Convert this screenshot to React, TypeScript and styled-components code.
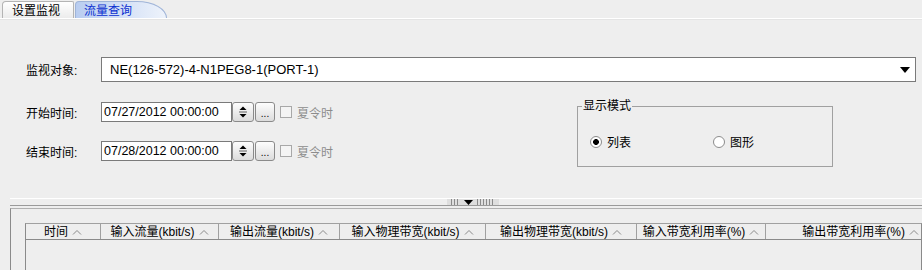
import React, { useState } from "react";
import styled, { createGlobalStyle } from "styled-components";

const GlobalStyle = createGlobalStyle`
  html, body {
    margin: 0;
    padding: 0;
    background: #eeeeee;
  }
  body {
    font-family: "Liberation Sans", "Noto Sans CJK SC", sans-serif;
    font-size: 12px;
    color: #000;
  }
`;

const columns = [
  { title: "时间", width: 75 },
  { title: "输入流量(kbit/s)", width: 118 },
  { title: "输出流量(kbit/s)", width: 121 },
  { title: "输入物理带宽(kbit/s)", width: 146 },
  { title: "输出物理带宽(kbit/s)", width: 151 },
  { title: "输入带宽利用率(%)", width: 129 },
  { title: "输出带宽利用率(%)", width: 0, last: true },
];

const SortCaret = () => (
  <svg width="10" height="6" viewBox="0 0 10 6">
    <path d="M1 5.5 L5 1.5 L9 5.5" fill="none" stroke="#8a8a8a" strokeWidth="1" />
  </svg>
);

const ComboArrow = () => (
  <svg width="10" height="6" viewBox="0 0 10 6">
    <path d="M0 0 H10 L5 6 Z" fill="#000" />
  </svg>
);

const SpinArrows = () => (
  <svg width="10" height="16" viewBox="0 0 10 16">
    <path d="M1.5 6 L5 2.5 L8.5 6 Z" fill="#000" />
    <path d="M1 8 H9" stroke="#606060" strokeWidth="1" />
    <path d="M1.5 10 L5 13.5 L8.5 10 Z" fill="#000" />
  </svg>
);

export default function App() {
  const [mode, setMode] = useState<"list" | "chart">("list");
  return (
    <>
      <GlobalStyle />
      <Frame>
        <TabBar>
          <Tab>设置监视</Tab>
          <Tab $active>流量查询</Tab>
        </TabBar>

        <TopPane>
          <FieldRow>
            <Label>监视对象:</Label>
            <Combo>
              <span>NE(126-572)-4-N1PEG8-1(PORT-1)</span>
              <ComboArrow />
            </Combo>
          </FieldRow>

          <TimeSection>
            <TimeColumn>
              {[
                ["开始时间:", "07/27/2012 00:00:00"],
                ["结束时间:", "07/28/2012 00:00:00"],
              ].map(([label, value]) => (
                <TimeRow key={label}>
                  <Label>{label}</Label>
                  <DateInput>{value}</DateInput>
                  <Spinner>
                    <SpinArrows />
                  </Spinner>
                  <DotsButton>...</DotsButton>
                  <CheckBox />
                  <DimText>夏令时</DimText>
                </TimeRow>
              ))}
            </TimeColumn>

            <GroupBox>
              <Legend>显示模式</Legend>
              <RadioRow>
                <RadioItem $width={123} onClick={() => setMode("list")}>
                  <Radio $checked={mode === "list"} />
                  列表
                </RadioItem>
                <RadioItem $width={100} onClick={() => setMode("chart")}>
                  <Radio $checked={mode === "chart"} />
                  图形
                </RadioItem>
              </RadioRow>
            </GroupBox>
          </TimeSection>
        </TopPane>

        <Divider>
          <Grip>
            <GripLines $count={3} />
            <svg width="9" height="5" viewBox="0 0 9 5">
              <path d="M0 0 H9 L4.5 5 Z" fill="#000" />
            </svg>
            <GripLines $count={6} />
          </Grip>
        </Divider>

        <BottomPane>
          <Table>
            <HeaderRow>
              {columns.map((c) => (
                <HeaderCell key={c.title} $width={c.width} $last={c.last}>
                  {c.title}
                  <SortCaret />
                </HeaderCell>
              ))}
            </HeaderRow>
            <TableBody />
          </Table>
        </BottomPane>
      </Frame>
    </>
  );
}

const Frame = styled.div`
  width: 922px;
  height: 270px;
  overflow: hidden;
  display: flex;
  flex-direction: column;
  background: #eeeeee;
`;

const TabBar = styled.div`
  height: 18px;
  display: flex;
  align-items: flex-end;
  padding-left: 2px;
  border-bottom: 1px solid #ffffff;
  box-shadow: 0 1px 0 #e4e4e4;
`;

const Tab = styled.div<{ $active?: boolean }>`
  height: 17px;
  box-sizing: border-box;
  display: flex;
  align-items: center;
  font-size: 12px;
  line-height: 12px;
  padding: 1px ${(p) => (p.$active ? "34px" : "13px")} 0 ${(p) => (p.$active ? "8px" : "9px")};
  margin-right: ${(p) => (p.$active ? "0" : "1px")};
  color: ${(p) => (p.$active ? "#0a2fd0" : "#000")};
  border: 1px solid ${(p) => (p.$active ? "#9fb4d8" : "#b4b4b4")};
  border-bottom: none;
  border-radius: ${(p) => (p.$active ? "4px 30px 0 0 / 4px 17px 0 0" : "4px 2px 0 0")};
  background: ${(p) =>
    p.$active
      ? "linear-gradient(to right, #b9cdf0 0%, #d3e0f6 50%, #eef3fb 100%)"
      : "linear-gradient(to bottom, #ffffff, #ececec)"};
`;

const TopPane = styled.div`
  height: 179px;
  padding: 38px 0 0 26px;
  box-sizing: border-box;
`;

const FieldRow = styled.div`
  display: flex;
  align-items: center;
  height: 25px;
`;

const Label = styled.div`
  width: 75px;
  flex: none;
  font-size: 12px;
  color: #000;
`;

const Combo = styled.div`
  width: 815px;
  height: 25px;
  box-sizing: border-box;
  border: 1px solid #7a7a7a;
  background: #ffffff;
  display: flex;
  align-items: center;
  justify-content: space-between;
  padding: 0 5px 0 8px;
  font-size: 13px;
`;

const TimeSection = styled.div`
  display: flex;
  margin-top: 20px;
`;

const TimeColumn = styled.div`
  width: 548px;
  display: flex;
  flex-direction: column;
  gap: 19px;
`;

const TimeRow = styled.div`
  display: flex;
  align-items: center;
  height: 20px;
`;

const DateInput = styled.div`
  width: 131px;
  height: 20px;
  box-sizing: border-box;
  border: 1px solid #7a7a7a;
  background: #ffffff;
  padding-left: 2px;
  font-size: 12.5px;
  display: flex;
  align-items: center;
`;

const Spinner = styled.div`
  width: 22px;
  height: 20px;
  box-sizing: border-box;
  border: 1px solid #8a8a8a;
  border-radius: 3px;
  background: linear-gradient(to bottom, #fdfdfd, #dcdcdc);
  display: flex;
  align-items: center;
  justify-content: center;
`;

const DotsButton = styled.div`
  width: 20px;
  height: 20px;
  box-sizing: border-box;
  margin-left: 1px;
  border: 1px solid #8a8a8a;
  border-radius: 3px;
  background: linear-gradient(to bottom, #fdfdfd, #dcdcdc);
  display: flex;
  align-items: flex-end;
  justify-content: center;
  font-size: 10px;
  line-height: 14px;
  color: #000;
`;

const CheckBox = styled.div`
  width: 12px;
  height: 12px;
  box-sizing: border-box;
  margin-left: 5px;
  border: 1px solid #a8a8a8;
  background: #f4f4f4;
`;

const DimText = styled.span`
  margin-left: 5px;
  color: #8c8c8c;
  font-size: 12px;
`;

const GroupBox = styled.fieldset`
  width: 256px;
  height: 67px;
  box-sizing: border-box;
  margin: -2px 0 0 3px;
  padding: 0 0 0 12px;
  border: 1px solid #a0a0a0;
  border-radius: 0;
`;

const Legend = styled.legend`
  padding: 0 1px;
  margin-left: -8px;
  font-size: 12px;
  line-height: 12px;
  color: #000;
`;

const RadioRow = styled.div`
  display: flex;
  align-items: center;
  margin-top: 21px;
`;

const RadioItem = styled.label<{ $width: number }>`
  width: ${(p) => p.$width}px;
  display: flex;
  align-items: center;
  gap: 5px;
  font-size: 12px;
  cursor: default;
`;

const Radio = styled.span<{ $checked: boolean }>`
  width: 12px;
  height: 12px;
  box-sizing: border-box;
  border-radius: 50%;
  border: 1px solid #8c8c8c;
  background: ${(p) =>
    p.$checked
      ? "radial-gradient(circle, #000 0 2.6px, #ffffff 3.2px)"
      : "#ffffff"};
`;

const Divider = styled.div`
  margin-left: 10px;
  height: 6px;
  border-top: 1px solid #ffffff;
  border-bottom: 1px solid #9a9a9a;
  display: flex;
  justify-content: center;
`;

const Grip = styled.div`
  display: flex;
  align-items: center;
  gap: 4px;
  height: 6px;
  margin-left: 14px;
  padding: 0 4px;
  background: #dedede;
`;

const GripLines = styled.div<{ $count: number }>`
  width: ${(p) => p.$count * 3}px;
  height: 6px;
  background: repeating-linear-gradient(
    to right,
    #8a8a8a 0 1px,
    transparent 1px 3px
  );
`;

const BottomPane = styled.div`
  flex: 1;
  margin-left: 10px;
  margin-top: 2px;
  border-left: 1px solid #8a8a8a;
  border-top: 1px solid #b0b0b0;
  padding: 14px 0 0 14px;
`;

const Table = styled.div`
  height: 100%;
  border-left: 1px solid #8a8a8a;
  border-right: 1px solid #8a8a8a;
  border-top: 1px solid #a0a0a0;
  display: flex;
  flex-direction: column;
`;

const HeaderRow = styled.div`
  display: flex;
  height: 16px;
  box-sizing: border-box;
  border-bottom: 1px solid #8a8a8a;
`;

const HeaderCell = styled.div<{ $width: number; $last?: boolean }>`
  width: ${(p) => (p.$last ? "auto" : `${p.$width}px`)};
  flex: ${(p) => (p.$last ? "1" : "none")};
  box-sizing: border-box;
  display: flex;
  align-items: center;
  justify-content: ${(p) => (p.$last ? "flex-end" : "center")};
  gap: 4px;
  padding-right: ${(p) => (p.$last ? "2px" : "0")};
  border-right: ${(p) => (p.$last ? "none" : "1px solid #a0a0a0")};
  font-size: 12px;
  line-height: 14px;
  white-space: nowrap;
`;

const TableBody = styled.div`
  flex: 1;
`;
